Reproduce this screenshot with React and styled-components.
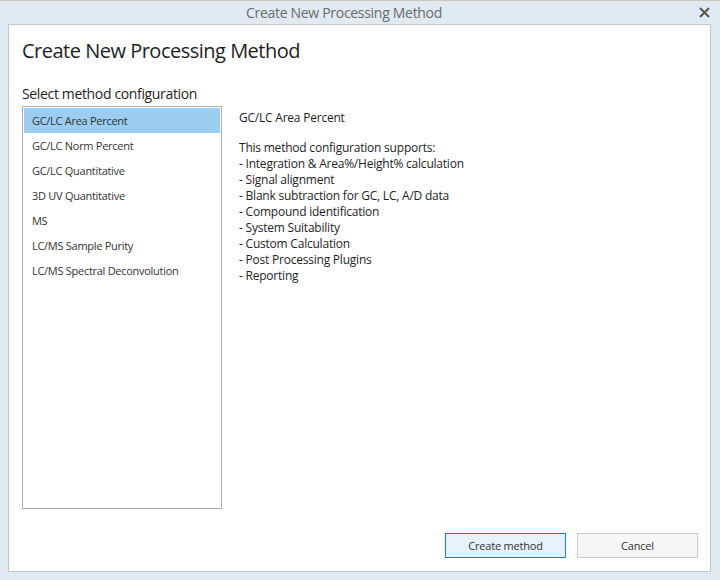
import React, { useState } from "react";
import styled, { createGlobalStyle } from "styled-components";

const Global = createGlobalStyle`
  html, body { margin: 0; padding: 0; background: #dfeaf3; }
  body { font-family: "Open Sans", "Noto Sans", sans-serif; }
  * { box-sizing: border-box; }
`;

const Frame = styled.div`
  width: 720px;
  height: 580px;
  background: #dfeaf3;
  border-top: 1px solid #c6c9cc;
  display: flex;
  flex-direction: column;
`;

const TitleBar = styled.div`
  height: 23px;
  display: flex;
  align-items: center;
`;

const TitleText = styled.div`
  flex: 1;
  text-align: center;
  font-size: 14px;
  color: #6b6b6b;
  letter-spacing: -0.3px;
`;

const CloseBtn = styled.button`
  width: 32px;
  height: 23px;
  border: none;
  background: transparent;
  padding: 0;
  display: flex;
  align-items: center;
  justify-content: center;
  cursor: pointer;
`;

const Panel = styled.div`
  margin: 0 9px 8px 8px;
  flex: 1;
  background: #fff;
  border: 1px solid #c3c5c7;
  display: flex;
  flex-direction: column;
  padding: 12px 12px 12px 13px;
`;

const Heading = styled.h1`
  margin: 0;
  font-size: 20px;
  font-weight: 400;
  line-height: 28px;
  color: #1e1e1e;
  letter-spacing: -0.5px;
`;

const Label = styled.div`
  margin-top: 19px;
  font-size: 14px;
  line-height: 19px;
  color: #1e1e1e;
  letter-spacing: -0.35px;
`;

const Body = styled.div`
  margin-top: 3px;
  display: flex;
  gap: 17px;
`;

const List = styled.ul`
  list-style: none;
  margin: 0;
  padding: 1px;
  width: 200px;
  height: 403px;
  border: 1px solid #adadad;
  flex-shrink: 0;
`;

const Item = styled.li`
  height: 25px;
  display: flex;
  align-items: center;
  padding-left: 8px;
  font-size: 11px;
  color: #333;
  background: ${(p) => (p.$selected ? "#9acdef" : "transparent")};
  cursor: default;
  letter-spacing: -0.28px;
`;

const Desc = styled.div`
  padding-top: 4px;
  font-size: 12px;
  line-height: 16px;
  color: #1e1e1e;
  letter-spacing: -0.22px;
`;

const DescTitle = styled.div`
  margin-bottom: 14px;
`;

const Footer = styled.div`
  margin-top: auto;
  display: flex;
  justify-content: flex-end;
  gap: 11px;
  padding-bottom: 1px;
`;

const Button = styled.button`
  width: 121px;
  height: 25px;
  font-family: inherit;
  font-size: 11px;
  color: #333;
  letter-spacing: -0.2px;
  border: 1px solid ${(p) => (p.$primary ? "#1a80c8" : "#cccccc")};
  background: ${(p) => (p.$primary ? "#e5f1fb" : "#f6f6f6")};
  padding: 0;
  cursor: pointer;
`;

const items = [
  "GC/LC Area Percent",
  "GC/LC Norm Percent",
  "GC/LC Quantitative",
  "3D UV Quantitative",
  "MS",
  "LC/MS Sample Purity",
  "LC/MS Spectral Deconvolution",
];

const features = [
  "This method configuration supports:",
  "- Integration & Area%/Height% calculation",
  "- Signal alignment",
  "- Blank subtraction for GC, LC, A/D data",
  "- Compound identification",
  "- System Suitability",
  "- Custom Calculation",
  "- Post Processing Plugins",
  "- Reporting",
];

export default function App() {
  const [sel, setSel] = useState(0);
  return (
    <>
      <Global />
      <Frame>
        <TitleBar>
          <TitleText>Create New Processing Method</TitleText>
          <CloseBtn aria-label="Close">
            <svg width="11" height="11" viewBox="0 0 11 11">
              <path d="M1 1 L10 10 M10 1 L1 10" stroke="#555" strokeWidth="2" />
            </svg>
          </CloseBtn>
        </TitleBar>
        <Panel>
          <Heading>Create New Processing Method</Heading>
          <Label>Select method configuration</Label>
          <Body>
            <List>
              {items.map((it, i) => (
                <Item key={it} $selected={i === sel} onClick={() => setSel(i)}>
                  {it}
                </Item>
              ))}
            </List>
            <Desc>
              <DescTitle>GC/LC Area Percent</DescTitle>
              {features.map((f) => (
                <div key={f}>{f}</div>
              ))}
            </Desc>
          </Body>
          <Footer>
            <Button $primary>Create method</Button>
            <Button>Cancel</Button>
          </Footer>
        </Panel>
      </Frame>
    </>
  );
}
